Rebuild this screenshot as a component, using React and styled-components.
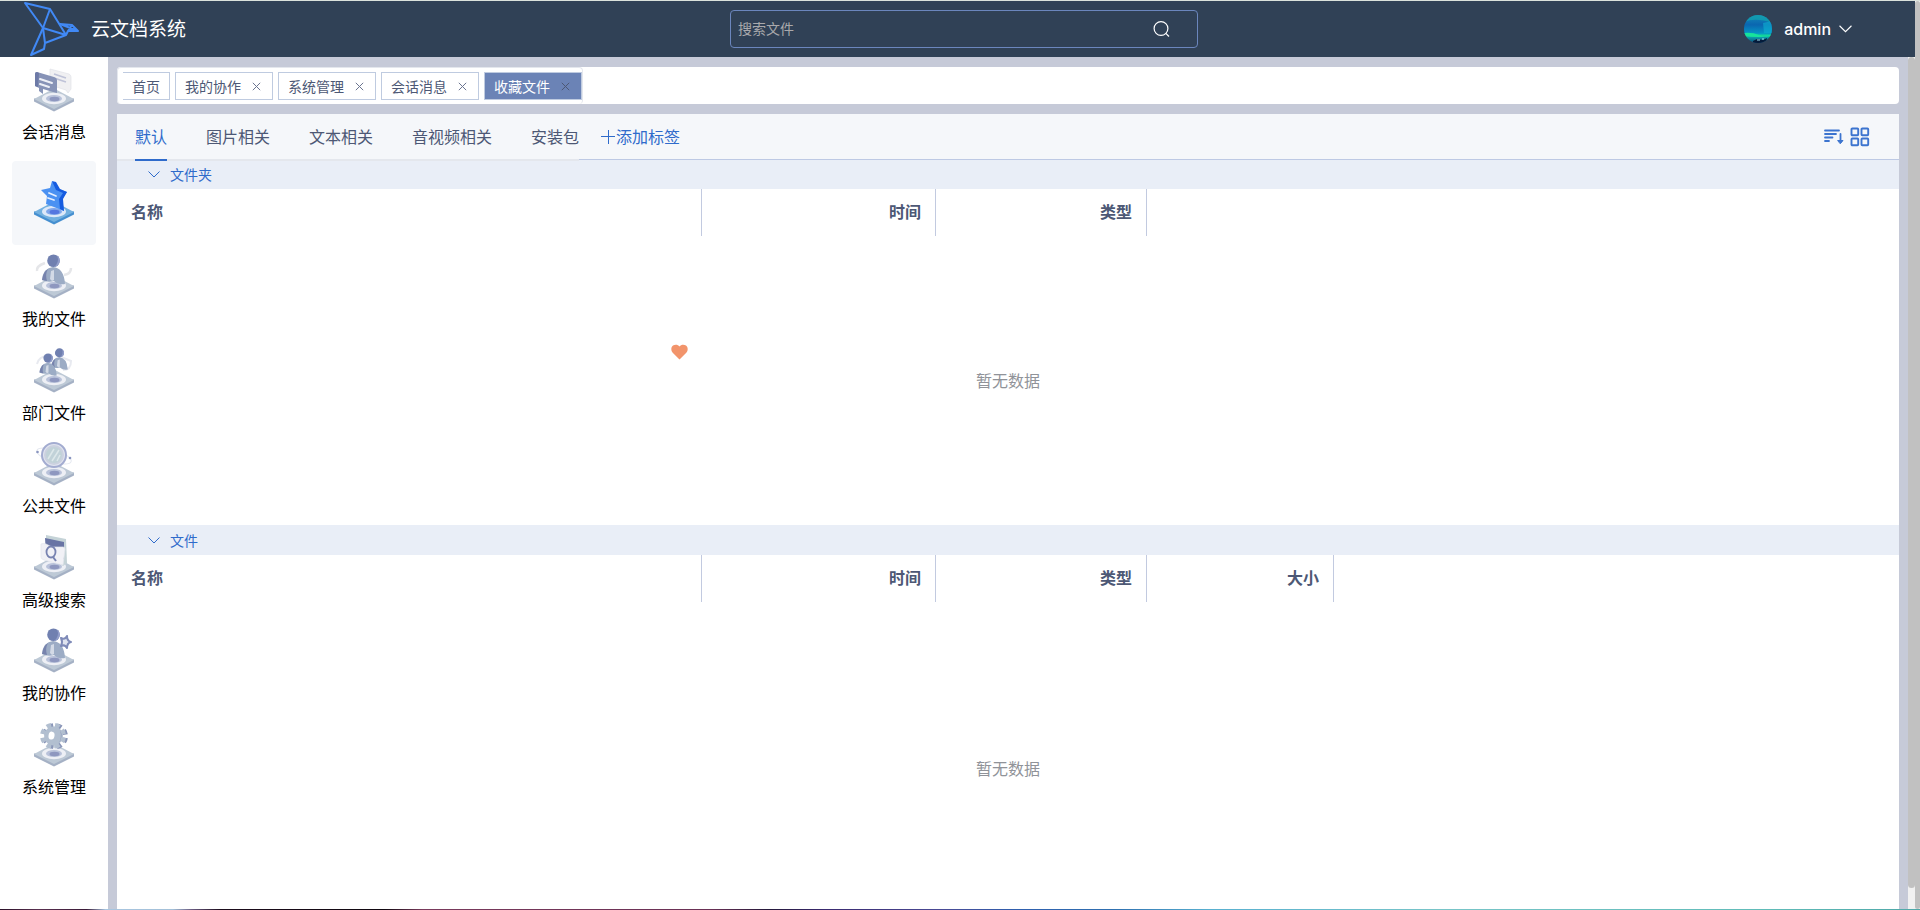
import React from "react";
import styled, { createGlobalStyle, css } from "styled-components";

const GlobalStyle = createGlobalStyle`
  * { box-sizing: border-box; }
  body {
    margin: 0;
    font-family: Inter, "Noto Sans CJK SC", sans-serif;
    font-size: 16px;
    color: #4d5875;
    background: #fff;
  }
  button, input { font: inherit; color: inherit; }
  button { border: 0; padding: 0; background: none; cursor: pointer; }
  a { color: inherit; text-decoration: none; }
  svg { display: block; flex: none; }
`;

const Window = styled.div`
  height: 100vh;
  display: flex;
  flex-direction: column;
  overflow: hidden;
  border-top: 1px solid #dbe2dc;
`;
const Viewport = styled.div`
  flex: 1;
  min-height: 0;
  display: flex;
`;
const BottomEdge = styled.div`
  height: 1px;
  background: linear-gradient(90deg, #2a1028 0%, #5a3050 2%, #3a1a38 4.5%, #a9c6e0 5.5%, #a3c0d8 9%, #6a5a80 10%, #1c0c1c 11.5%, #100810 20%, #7a3a5c 22%, #6a3055 37%, #25183a 40%, #3a2a70 43%, #4a4a95 49%, #2f5fae 53%, #2f70b0 58%, #58b0d0 63%, #78c5c8 75%, #60bcb8 92%, #4fa8a8 100%);
`;
const Page = styled.div`
  flex: 1;
  min-width: 0;
  display: flex;
  flex-direction: column;
`;
const ScrollTrack = styled.div`
  flex: none;
  width: ${(p) => p.$width}px;
  background: #f1f1f1;
  padding-bottom: ${(p) => p.$rest}px;
`;
const ScrollThumb = styled.div`
  height: 100%;
  border-radius: 4px;
  background: #c1c1c1;
`;

const Header = styled.header`
  flex: none;
  height: 56px;
  display: grid;
  grid-template-columns: 1fr 468px 1fr;
  align-items: center;
  padding: 0 10px 0 23px;
  background: #304156;
  color: #fff;
`;
const Brand = styled.div`
  display: flex;
  align-items: center;
  gap: 11px;
  height: 56px;
`;
const BrandName = styled.h1`
  margin: 0;
  padding-top: 2px;
  font-size: 19px;
  line-height: 28px;
  font-weight: 400;
`;
const SearchBox = styled.form`
  display: flex;
  align-items: center;
  height: 38px;
  padding: 0 27px 0 7px;
  border: 1px solid #6b86bd;
  border-radius: 4px;
`;
const SearchInput = styled.input`
  flex: 1;
  min-width: 0;
  height: 36px;
  padding: 0 0 2px;
  border: 0;
  outline: 0;
  background: transparent;
  font-size: 14px;
  color: #fff;
  &::placeholder { color: #a9a9ac; opacity: 1; }
`;
const UserButton = styled.button`
  justify-self: end;
  display: flex;
  align-items: center;
  margin-right: 53px;
  font-weight: 500;
  line-height: 28px;
`;
const UserName = styled.span`
  margin: 0 8px 0 12px;
`;

const Body = styled.div`
  flex: 1;
  min-height: 0;
  display: flex;
`;
const Sidebar = styled.nav`
  flex: none;
  width: 108px;
  padding: 10px 12px;
  background: #fff;
`;
const MenuList = styled.ul`
  height: 739px;
  margin: 0;
  padding: 0;
  list-style: none;
  display: flex;
  flex-direction: column;
  justify-content: space-between;
`;
const MenuLink = styled.a`
  display: flex;
  flex-direction: column;
  align-items: center;
  gap: 7px;
  height: 84px;
  border-radius: 4px;
  line-height: 24px;
  color: #000;
  ${(p) => p.$active && css`
    justify-content: center;
    background: #f5f7fa;
  `}
`;

const Main = styled.main`
  flex: 1;
  min-width: 0;
  display: flex;
  flex-direction: column;
  gap: 10px;
  padding: 10px 9px 0;
  background: #c6cad8;
`;
const TagBar = styled.div`
  flex: none;
  display: flex;
  height: 37px;
  border-radius: 4px;
  background: #fff;
`;
const TagList = styled.div`
  display: flex;
  gap: 5px;
  padding: 4px 0 4px 5px;
  border: 1px solid #e4e7ed;
  border-bottom: 0;
  border-radius: 4px;
`;
const Tag = styled.div`
  display: flex;
  align-items: center;
  gap: 11px;
  height: 28px;
  padding: 0 ${(p) => (p.$first ? 9 : 11)}px 0 9px;
  border: 1px solid #bfcbe0;
  border-left-width: ${(p) => (p.$first ? 0 : 1)}px;
  font-size: 14px;
  line-height: 24px;
  color: ${(p) => (p.$active ? "#fff" : "#4d5875")};
  background: ${(p) => (p.$active ? "#6b83b6" : "#fff")};
`;
const TagLink = styled.a`
  padding-top: 2px;
`;
const CloseButton = styled.button`
  color: ${(p) => (p.$active ? "#4d5875" : "#6b7590")};
`;

const Panel = styled.section`
  flex: 1;
  min-height: 0;
  overflow: hidden;
  position: relative;
  background: #fff;
`;
const PanelHead = styled.div`
  position: relative;
  display: flex;
  align-items: center;
  height: 45px;
  padding-right: 29px;
  background: #f5f7fa;
  box-shadow: 0 1px 0 #bdc9e4;
`;
const FilterTabs = styled.div`
  display: flex;
  gap: 39px;
  padding-left: 18px;
  height: 45px;
  box-shadow: 0 2px 0 #e4e7ed;
`;
const FilterTab = styled.button`
  height: 45px;
  line-height: 24px;
  color: ${(p) => (p.$active ? "#2f6bcb" : "#4d5875")};
  box-shadow: ${(p) => (p.$active ? "0 2px 0 #2f6bcb" : "none")};
`;
const AddTag = styled.button`
  display: flex;
  align-items: center;
  gap: 1px;
  margin-left: 22px;
  line-height: 24px;
  color: #2f6bcb;
`;
const HeadTools = styled.div`
  display: flex;
  align-items: center;
  gap: 6px;
  margin-left: auto;
`;
const SectionBar = styled.button`
  display: flex;
  align-items: center;
  gap: 10px;
  width: 100%;
  height: 30px;
  padding: 1px 31px 0;
  font-size: 14px;
  line-height: 20px;
  color: #2f6bcb;
  background: #e9eef7;
`;
const DataTable = styled.table`
  width: 100%;
  table-layout: fixed;
  border-collapse: separate;
  border-spacing: 0;
`;
const HeadCell = styled.th`
  width: ${(p) => (p.$width ? p.$width + "px" : "auto")};
  height: 47px;
  padding: 0 14px 1px;
  border-right: ${(p) => (p.$width ? "1px solid #c2cae0" : "0")};
  font-weight: 700;
  line-height: 24px;
  text-align: ${(p) => p.$align || "right"};
`;
const EmptyCell = styled.td`
  height: ${(p) => p.$height}px;
  padding: 0;
  text-align: center;
  line-height: 24px;
  color: #909399;
`;
const FloatingHeart = styled.span`
  position: absolute;
  left: 554px;
  top: 230px;
`;

function Logo() {
  return (
    <svg width="57" height="56" viewBox="0 0 57 56" fill="none" stroke="#4189f5" strokeWidth="2" strokeLinejoin="round" aria-hidden="true">
      <path d="M2 2L27 8L43 34L20 27Z" />
      <path d="M27 8L20 27L8 54L21 48L22 42L43 34" />
      <path d="M20 27L22 42" />
      <path d="M37 23L49 24L55 30L37 23ZM49 24L45 30H55M45 30L43 34" />
    </svg>
  );
}

function Avatar() {
  return (
    <svg width="28" height="28" viewBox="0 0 28 28" aria-hidden="true">
      <defs>
        <linearGradient id="sky" x1="0" y1="0" x2="0" y2="1">
          <stop offset="0" stopColor="#1489b8" />
          <stop offset=".35" stopColor="#0a66b0" />
          <stop offset=".65" stopColor="#0594c4" />
          <stop offset=".73" stopColor="#12d69b" />
          <stop offset=".8" stopColor="#0c9ba8" />
          <stop offset="1" stopColor="#0b4a7c" />
        </linearGradient>
        <clipPath id="round"><circle cx="14" cy="14" r="14" /></clipPath>
      </defs>
      <g clipPath="url(#round)">
        <rect width="28" height="28" fill="url(#sky)" />
        <path d="M0 7Q12 2 28 8V4L18 0H5Z" fill="#13a3ad" opacity=".7" />
        <path d="M19 8L28 6V18H20Z" fill="#0db0d2" opacity=".6" />
        <path d="M0 18Q8 17 15 20T28 19V21Q14 23 0 21Z" fill="#17e39b" />
        <path d="M9 26L13 24L19 25L23 23L22 28H9Z" fill="#051b3a" />
        <path d="M13 25H16M18 24H20" stroke="#a0e0f0" />
      </g>
    </svg>
  );
}

function Chevron({ width = 12, height = 7 }) {
  return (
    <svg width={width} height={height} viewBox="0 0 12 7" fill="none" stroke="currentColor" aria-hidden="true">
      <path d="M.5 .5L6 6L11.500 .5" />
    </svg>
  );
}

function Cross() {
  return (
    <svg width="9" height="9" viewBox="0 0 9 9" fill="none" stroke="currentColor" aria-hidden="true">
      <path d="M.8 .8L8.200 8.200M8.200 .8L.8 8.200" />
    </svg>
  );
}

function Base({ active }) {
  const c = active
    ? { side: "#458fd0", top: "#72b0df", ring: "#dce8f8", well: "#7fa6ea", deep: "#5577e0" }
    : { side: "#a5b1c5", top: "#bdc9d6", ring: "#edeff5", well: "#b9c2da", deep: "#8e97bf" };
  return (
    <g>
      <path d="M2 34.500L22 44.500L42 34.500V31.500H2Z" fill={c.side} />
      <path d="M2 32L22 21.500L42 32L22 42Z" fill={c.top} />
      <ellipse cx="22" cy="31.500" rx="12" ry="5.800" fill={c.ring} />
      <ellipse cx="22" cy="31.500" rx="8" ry="3.600" fill={c.well} />
      <ellipse cx="22.500" cy="32" rx="5" ry="2.200" fill={c.deep} />
    </g>
  );
}

function Person({ scale = 1, x = 0, y = 0 }) {
  return (
    <g transform={`translate(${x} ${y}) scale(${scale})`}>
      <path d="M10 26Q11 14 21 13Q32 14 33 30Q26 31 22 27Q16 29 10 26Z" fill="#9cacc5" />
      <path d="M10 26Q11 18 16 15Q13 20 15 27Z" fill="#7783ad" />
      <path d="M19 17L22 16L22 26L20 27L18 25Z" fill="#d3dae6" />
      <circle cx="21.500" cy="6.800" r="6.300" fill="#7080b0" />
      <path d="M25 1.500A6.300 6.300 0 0 1 22 13A9 9 0 0 0 25 1.500Z" fill="#919dca" />
    </g>
  );
}

const ART = {
  message: (
    <g>
      <path d="M18 2L37 7Q39 8 39 10V22L36 26L34 23L18 18Z" fill="#f0f0f2" stroke="#e1e3e8" strokeWidth=".7" />
      <path d="M22 7L34 11M22 11L34 15" stroke="#bfc3d8" strokeWidth="1.700" />
      <path d="M5 5L22 10Q25 11 25 13V26L21 25L11 22V27L7 24V21L3 19V7Q3 5 5 5Z" fill="#8793b7" />
      <path d="M3 7Q3 5 5 5L7 6L6 20L3 19Z" fill="#6d7aa7" />
      <path d="M8 12L20 16M8 17L17 20" stroke="#eef0f7" strokeWidth="2" strokeLinecap="round" />
    </g>
  ),
  star: (
    <g>
      <path d="M20 1L27 9L35 12L30 19L32 31L22 27L14 24L15 16L9 10L18 8Z" fill="#4a91f2" />
      <path d="M20 1L24 2L28 9L35 12L31 19L32 31L28 29L27 19L31 13L24 10Z" fill="#155ce0" />
      <path d="M17 13L24 16M16 18L22 20" stroke="#e4efff" strokeWidth="1.800" strokeLinecap="round" />
    </g>
  ),
  person: (
    <g>
      <path d="M5 17Q4 12 13 9M32 21Q39 20 39 14" fill="none" stroke="#e5e6e9" strokeWidth="2.500" />
      <Person />
    </g>
  ),
  people: (
    <g>
      <path d="M5 16Q7 8 16 8M31 22Q39 22 39 13L29 9" fill="none" stroke="#e8eaf0" strokeWidth="2" />
      <Person scale={0.72} x={12} />
      <Person scale={0.75} x={0} y={5} />
    </g>
  ),
  globe: (
    <g>
      <ellipse cx="22" cy="15" rx="18" ry="6" fill="none" stroke="#e4e7ef" transform="rotate(18 22 15)" />
      <circle cx="22" cy="14" r="12" fill="#e1e4ef" stroke="#a3acd0" strokeWidth="2" />
      <circle cx="22" cy="14" r="9" fill="#c1d2d8" stroke="#cbd1df" strokeWidth="2" />
      <path d="M16 18L22 8M20 20L27 9M25 20L28 14" stroke="#dde8ea" strokeWidth="1.500" />
      <circle cx="5.500" cy="11" r="1.300" fill="#8995c0" />
      <circle cx="38" cy="17" r="1.300" fill="#8995c0" />
    </g>
  ),
  search: (
    <g>
      <path d="M14 0L34 4L35 28L31 31L14 20Z" fill="#c5d3d7" />
      <path d="M13 3L32 7V24L14 20Z" fill="#6974a4" />
      <path d="M9 9Q11 8 14 9L20 12L31 12Q33 12 33 14L31 30L12 25Q9 24 9 22Z" fill="#f1f1f6" stroke="#e3e5ec" strokeWidth=".7" />
      <ellipse cx="19" cy="17" rx="4.500" ry="5.500" fill="none" stroke="#7883b1" strokeWidth="1.800" />
      <path d="M21 22L24 26" stroke="#7883b1" strokeWidth="2" />
    </g>
  ),
  share: (
    <g>
      <Person />
      <path d="M29 10Q33 12 35 8Q35 13 39 14Q35 15 35 20Q33 16 29 18Q31 14 29 10Z" fill="#dfe3ef" stroke="#7f8bb8" strokeWidth="2" strokeLinejoin="round" />
    </g>
  ),
  gear: (
    <g>
      <g transform="rotate(9 22 14)">
        <circle cx="23" cy="14" r="10.500" fill="none" stroke="#8995b8" strokeWidth="5" strokeDasharray="4.500 3.750" />
        <circle cx="21" cy="14" r="10.500" fill="none" stroke="#b2bfd0" strokeWidth="5" strokeDasharray="4.500 3.750" />
        <circle cx="21.500" cy="14" r="9.500" fill="#b2bfd0" />
        <path d="M27 7Q32 14 27 22Q31 15 27 7Z" fill="#8995b8" />
        <ellipse cx="19.500" cy="14" rx="3" ry="4" fill="#fff" />
      </g>
    </g>
  ),
};

function MenuIcon({ name, active }) {
  return (
    <svg width="44" height="46" viewBox="0 0 44 46" aria-hidden="true">
      <Base active={active} />
      {ART[name]}
    </svg>
  );
}

const MENU = [
  ["message", "会话消息"],
  ["star", "收藏文件"],
  ["person", "我的文件"],
  ["people", "部门文件"],
  ["globe", "公共文件"],
  ["search", "高级搜索"],
  ["share", "我的协作"],
  ["gear", "系统管理"],
];
const TAGS = ["首页", "我的协作", "系统管理", "会话消息", "收藏文件"];
const FILTERS = ["默认", "图片相关", "文本相关", "音视频相关", "安装包"];

const FOLDER_COLUMNS = [["名称", 585], ["时间", 234], ["类型", 211]];
const FILE_COLUMNS = [...FOLDER_COLUMNS, ["大小", 187]];

function FileSection({ title, columns, emptyHeight }) {
  return (
    <>
      <SectionBar type="button" aria-expanded="true">
        <Chevron />
        {title}
      </SectionBar>
      <DataTable aria-label={title}>
        <thead>
          <tr>
            {columns.map(([name, width], i) => (
              <HeadCell key={name} scope="col" $width={width} $align={i === 0 ? "left" : "right"}>{name}</HeadCell>
            ))}
            <HeadCell as="td" />
          </tr>
        </thead>
        <tbody>
          <tr><EmptyCell colSpan={columns.length + 1} $height={emptyHeight}>暂无数据</EmptyCell></tr>
        </tbody>
      </DataTable>
    </>
  );
}

export default function App() {
  return (
    <Window>
      <GlobalStyle />
      <Viewport>
        <Page>
          <Header>
            <Brand>
              <Logo />
              <BrandName>云文档系统</BrandName>
            </Brand>
            <SearchBox role="search" onSubmit={(e) => e.preventDefault()}>
              <SearchInput type="text" placeholder="搜索文件" aria-label="搜索文件" />
              <button type="submit" aria-label="搜索">
                <svg width="17" height="17" viewBox="0 0 17 17" fill="none" stroke="#fff" strokeWidth="1.200" aria-hidden="true">
                  <circle cx="8" cy="7.500" r="6.900" />
                  <path d="M12.800 12.300L16 15.500" />
                </svg>
              </button>
            </SearchBox>
            <UserButton type="button">
              <Avatar />
              <UserName>admin</UserName>
              <Chevron width={13} height={8} />
            </UserButton>
          </Header>
          <Body>
            <Sidebar>
              <MenuList>
                {MENU.map(([icon, label]) => {
                  const active = icon === "star";
                  return (
                    <li key={label}>
                      <MenuLink href="#" $active={active} aria-label={label}>
                        <MenuIcon name={icon} active={active} />
                        {!active && <span>{label}</span>}
                      </MenuLink>
                    </li>
                  );
                })}
              </MenuList>
            </Sidebar>
            <Main>
              <TagBar>
                <TagList>
                  {TAGS.map((label, i) => {
                    const active = i === TAGS.length - 1;
                    return (
                      <Tag key={label} $first={i === 0} $active={active}>
                        <TagLink href="#">{label}</TagLink>
                        {i > 0 && (
                          <CloseButton type="button" $active={active} aria-label={`关闭${label}`}><Cross /></CloseButton>
                        )}
                      </Tag>
                    );
                  })}
                </TagList>
              </TagBar>
              <Panel>
                <PanelHead>
                  <FilterTabs role="tablist">
                    {FILTERS.map((label, i) => (
                      <FilterTab key={label} type="button" role="tab" aria-selected={i === 0} $active={i === 0}>{label}</FilterTab>
                    ))}
                  </FilterTabs>
                  <AddTag type="button">
                    <svg width="14" height="14" viewBox="0 0 14 14" stroke="currentColor" aria-hidden="true">
                      <path d="M7.500 0V14M0 6.500H14" />
                    </svg>
                    添加标签
                  </AddTag>
                  <HeadTools>
                    <button type="button" aria-label="排序">
                      <svg width="21" height="18" viewBox="0 0 21 18" fill="none" stroke="#3c74cf" strokeWidth="1.800" strokeLinecap="round" aria-hidden="true">
                        <path d="M2 2.500H16M2 6H13M2 9.500H9.500M2 13H6" />
                        <path d="M17.500 6V14" />
                        <path d="M15 12.500H20L17.500 15.500Z" fill="#3c74cf" strokeWidth="1" />
                      </svg>
                    </button>
                    <button type="button" aria-label="网格视图">
                      <svg width="20" height="20" viewBox="0 0 20 20" fill="none" stroke="#3c74cf" strokeWidth="1.900" aria-hidden="true">
                        <rect x="1.500" y="1.500" width="6.700" height="6.700" rx=".8" />
                        <rect x="11.500" y="1.500" width="6.700" height="6.700" rx=".8" />
                        <rect x="1.500" y="11.500" width="6.700" height="6.700" rx=".8" />
                        <rect x="11.500" y="11.500" width="6.700" height="6.700" rx=".8" />
                      </svg>
                    </button>
                  </HeadTools>
                </PanelHead>
                <FileSection title="文件夹" columns={FOLDER_COLUMNS} emptyHeight={289} />
                <FileSection title="文件" columns={FILE_COLUMNS} emptyHeight={334} />
                <FloatingHeart aria-hidden="true">
                  <svg width="17" height="16" viewBox="0 0 17 16" fill="#f2946b">
                    <path d="M8.500 15.500L1.500 8.500C-.3 6.500 0 3 2 1.600C4 .2 7 .4 8.500 2.600C10 .4 13 .2 15 1.600C17 3 17.300 6.500 15.500 8.500Z" />
                  </svg>
                </FloatingHeart>
              </Panel>
            </Main>
            <ScrollTrack $width={7} $rest={21} aria-hidden="true"><ScrollThumb /></ScrollTrack>
          </Body>
        </Page>
        <ScrollTrack $width={5} $rest={0} aria-hidden="true"><ScrollThumb /></ScrollTrack>
      </Viewport>
      <BottomEdge />
    </Window>
  );
}
